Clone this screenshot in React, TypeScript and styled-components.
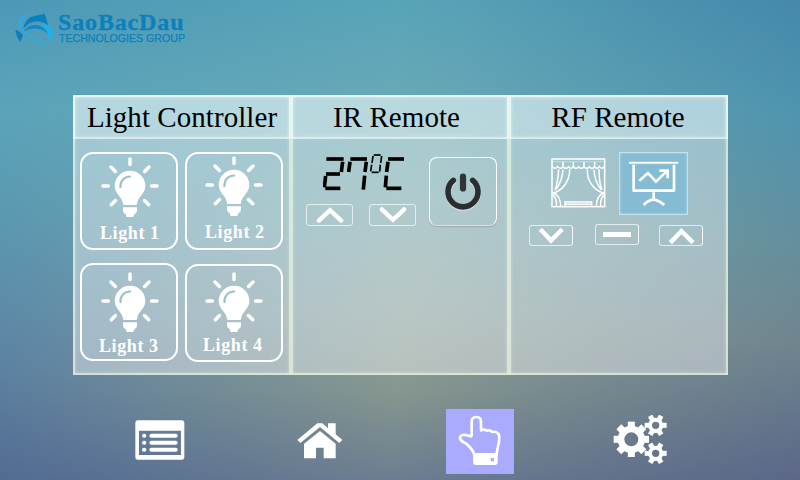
import React from "react";
import styled, { createGlobalStyle } from "styled-components";

const GlobalStyle = createGlobalStyle`
  * { box-sizing: border-box; }
  body { margin: 0; overflow: hidden; }
  button { padding: 0; background: none; border: 0; font: inherit; color: inherit; }
`;

const Screen = styled.div`
  position: relative;
  isolation: isolate;
  width: 800px;
  height: 480px;
  overflow: hidden;
  font-family: "Liberation Serif", "Times New Roman", serif;
  background: linear-gradient(#5aa6b9 0, #69aab7 90px, #7caaac 200px, #8ba39f 310px, #86978f 390px, #6c7d91 480px);

  &::before,
  &::after {
    content: "";
    position: absolute;
    inset: 0;
    z-index: -1;
  }
  &::before {
    background: linear-gradient(#4c98b6 0, #5aa3ba 110px, #5795b0 230px, #557da4 370px, #4b6794 480px);
    mask-image: linear-gradient(100deg, #000 0, rgba(0, 0, 0, 0.5) 25%, transparent 52%);
  }
  &::after {
    background: linear-gradient(#4588aa 0, #4f94af 110px, #648f9d 240px, #70858f 340px, #66788c 400px, #5b6788 480px);
    mask-image: linear-gradient(270deg, #000 0, rgba(0, 0, 0, 0.6) 22%, transparent 50%);
  }
`;

const Brand = styled.header`
  display: flex;
  height: 95px;
  padding: 12px 0 0 14px;
  color: #0b80bd;
`;

const BrandText = styled.div`
  margin-left: 4px;
`;

const BrandName = styled.div`
  height: 21px;
  font-size: 24px;
  line-height: 20px;
  font-weight: bold;
  letter-spacing: 0.85px;
  -webkit-text-stroke: 0.3px #0b80bd;
  white-space: nowrap;
`;

const BrandTag = styled.div`
  padding-left: 1px;
  font: 10.6px/11px "Liberation Sans", Arial, sans-serif;
  -webkit-text-stroke: 0.25px #0b80bd;
  white-space: nowrap;
`;

const Art = styled.svg<{ $w: number; $h: number }>`
  display: block;
  flex: none;
  width: ${(p) => p.$w}px;
  height: ${(p) => p.$h}px;
`;

const Panel = styled.main`
  display: grid;
  grid-template-columns: 218px 218px 219px;
  width: 655px;
  height: 280px;
  margin-left: 73px;
`;

const Column = styled.section`
  display: flex;
  flex-direction: column;
  background: rgba(255, 255, 255, 0.4);
  box-shadow: inset 0 0 0 2px rgba(243, 250, 228, 0.45), inset 0 0 4px 1px rgba(243, 250, 232, 0.6);
`;

const Title = styled.h2<{ $shift?: number }>`
  height: 44px;
  margin: 0;
  padding-right: ${(p) => p.$shift ?? 0}px;
  font-size: 29px;
  line-height: 45px;
  font-weight: normal;
  letter-spacing: 0.06px;
  text-align: center;
  white-space: nowrap;
  color: #000;
  background: rgba(228, 245, 250, 0.32);
  box-shadow: inset 0 0 0 2px rgba(245, 255, 250, 0.35), inset 0 0 5px 1px rgba(245, 255, 252, 0.5);
`;

const LightGrid = styled.div`
  display: grid;
  grid-template-columns: 98px 98px;
  column-gap: 7px;
  row-gap: 13px;
  padding: 13px 0 0 7px;
`;

const LightTile = styled.button<{ $drop: number }>`
  display: flex;
  flex-direction: column;
  align-items: flex-start;
  width: 98px;
  height: 98px;
  margin-top: ${(p) => p.$drop}px;
  border: 2px solid #fff;
  border-radius: 13px;
`;

const BulbSlot = styled.span<{ $top: number; $left: number }>`
  padding: ${(p) => p.$top}px 0 0 ${(p) => p.$left}px;
`;

const LightLabel = styled.span<{ $top: number; $left: number }>`
  margin: ${(p) => p.$top}px 0 0 ${(p) => p.$left}px;
  font-size: 18px;
  line-height: 20px;
  font-weight: bold;
  letter-spacing: 0.6px;
  white-space: nowrap;
  color: #fff;
`;

const IrBody = styled.div`
  display: flex;
  padding: 13px 0 0 15px;
`;

const Climate = styled.div`
  width: 123px;
`;

const Reading = styled.div`
  padding-left: 17px;
  height: 52px;
`;

const KeyRow = styled.div<{ $gap: number }>`
  display: flex;
  gap: ${(p) => p.$gap}px;
`;

const Key = styled.button<{ $w: number; $drop?: number }>`
  display: grid;
  place-items: center;
  width: ${(p) => p.$w}px;
  height: 22px;
  margin-top: ${(p) => p.$drop ?? 0}px;
  border: 1px solid rgba(255, 255, 255, 0.68);
  border-radius: 3px;
`;

const RfKey = styled(Key)`
  height: 21px;
  border-right-width: 1.5px;
  border-right-color: rgba(255, 255, 255, 0.9);
`;

const PowerKey = styled.button`
  display: grid;
  place-items: center;
  width: 68px;
  height: 69px;
  margin-top: 5px;
  border: 1.5px solid #fff;
  border-bottom-color: #e6dcdf;
  border-radius: 8px;
  box-shadow: 0 1px 1px rgba(150, 110, 120, 0.35);
`;

const RfDevices = styled.div`
  display: flex;
  padding: 13px 0 0 42px;
`;

const CurtainKey = styled.button`
  height: 50px;
  margin: 6px 13px 0 0;
`;

const ScreenKey = styled.button`
  display: grid;
  place-items: center;
  width: 69px;
  height: 63px;
  background: #86bbd4;
  box-shadow: inset 0 0 0 1px rgba(205, 235, 240, 0.7), inset 0 0 3px 1px rgba(190, 225, 235, 0.8);
`;

const RfKeys = styled.div`
  display: grid;
  grid-template-columns: 66px 64px 44px;
  padding: 9px 0 0 20px;
`;

const Nav = styled.nav`
  display: flex;
  align-items: flex-start;
  padding-top: 34px;
`;

const NavItem = styled.button<{ $left: number; $top: number }>`
  margin: ${(p) => p.$top}px 0 0 ${(p) => p.$left}px;
`;

const TouchItem = styled(NavItem)`
  width: 68px;
  height: 65px;
  background: #aaaaff;
`;

function Logo() {
  return (
    <Art $w={40} $h={36} viewBox="42 36 120 108">
      <path d="M92 51L134 41Q140 56 144 76Q118 56 90 69Q78 75 70 86Q74 62 92 51Z" fill="#087fbe" />
      <path d="M49 90Q62 95 69 106L61 126Q50 112 46 94Z" fill="#087fbe" />
      <path d="M70 96Q84 72 111 75Q135 80 146 104Q133 89 112 86Q88 84 70 96Z" fill="#1188c8" />
      <path d="M126 72Q154 72 164 100L146 125Q148 94 126 72Z" fill="#1fb0f0" />
      <path
        d="M82 47C54 46 54 76 76 99C94 117 120 120 133 135"
        fill="none"
        stroke="#20b2f0"
        strokeWidth="5"
        strokeLinecap="round"
      />
    </Art>
  );
}

function Bulb() {
  return (
    <Art $w={58} $h={61} viewBox="-29 -29 58 61">
      <path
        d="M0-27v5.4M-27 0h5.4M21.6 0h5.4M-19-19l4.4 4.4M19-19l-4.4 4.4M-14.5 14.5l-4.2 4.2M14.5 14.5l4.2 4.2"
        stroke="#fff"
        strokeWidth="3.5"
        strokeLinecap="round"
      />
      <path d="M0-15.3A15.2 15.2 0 0 1 15.3 0C15.3 8 7.8 10 6.7 19H-6.7C-7.8 10-15.3 8-15.3 0A15.2 15.2 0 0 1 0-15.3Z" fill="#fff" />
      <path d="M-7 21.3H7V25Q6.5 27.5 4.5 28L3.3 31H-3.3L-4.5 28Q-6.5 27.5-7 25Z" fill="#fff" />
      <path d="M-9.6 1.2C-9.6-5-6-9 .2-9.5" fill="none" stroke="#9fc2c9" strokeWidth="2.2" strokeLinecap="round" />
    </Art>
  );
}

type Segment = [number, number, number, number];

const temperature: { weight: number; segments: Segment[] }[] = [
  { weight: 11, segments: [[94, 57, 146, 57], [143, 65, 139, 96], [93, 102, 135, 102], [92, 108, 88, 142], [91, 145, 136, 145]] },
  { weight: 11, segments: [[166, 57, 216, 57], [165, 65, 161, 96], [214, 65, 210, 96], [209, 107, 205, 149]] },
  { weight: 5, segments: [[236, 45, 257, 45], [260, 48, 257, 69], [256, 74, 254, 95], [230, 97, 251, 97], [230, 74, 227, 94], [234, 48, 231, 69]] },
  { weight: 11, segments: [[279, 57, 327, 57], [279, 65, 275, 96], [274, 107, 271, 142], [274, 145, 319, 145]] },
];

function SegmentDisplay() {
  return (
    <Art $w={84} $h={40} viewBox="84 36 252 120" role="img" aria-label="27°C">
      {temperature.map((digit, i) => (
        <g key={i} stroke="#000" strokeWidth={digit.weight}>
          {digit.segments.map(([x1, y1, x2, y2], j) => (
            <line key={j} x1={x1} y1={y1} x2={x2} y2={y2} />
          ))}
        </g>
      ))}
    </Art>
  );
}

function Chevron({ up = false }: { up?: boolean }) {
  return (
    <Art $w={30} $h={18} viewBox="-15 -9 30 18">
      <path
        d={up ? "M-11.2 5.6L0-4.8L11.2 5.6" : "M-11.2-5.6L0 4.8L11.2-5.6"}
        fill="none"
        stroke="#fff"
        strokeWidth="4.4"
        strokeLinecap="round"
      />
    </Art>
  );
}

function SteepChevron({ up = false }: { up?: boolean }) {
  return (
    <Art $w={30} $h={18} viewBox="-15 -9 30 18">
      <path
        d={up ? "M-10.6 6.6L.4-4.8L12 6.6" : "M-10.6-6.8L0 4.6L11.2-6.8"}
        fill="none"
        stroke="#fff"
        strokeWidth="4.4"
      />
    </Art>
  );
}

function Minus() {
  return (
    <Art $w={30} $h={5} viewBox="0 0 30 5">
      <rect x="1" width="28" height="5" fill="#fff" />
    </Art>
  );
}

function Power() {
  return (
    <Art $w={40} $h={42} viewBox="-20 -21 40 42">
      <g fill="none" strokeLinecap="round">
        <path d="M-9.7-11.6A15 15 0 1 0 9.7-11.6" stroke="#dbe5e6" strokeWidth="5.6" transform="translate(0 1.4)" opacity=".7" />
        <path d="M-9.7-11.6A15 15 0 1 0 9.7-11.6" stroke="#2a2e31" strokeWidth="5.6" />
        <path d="M0-15.4V-3.6" stroke="#303437" strokeWidth="6.2" />
      </g>
    </Art>
  );
}

function Curtain() {
  return (
    <Art $w={55} $h={50} viewBox="107 53 165 150">
      <g fill="none" stroke="#fff" strokeWidth="4.5">
        <rect x="110" y="56" width="158" height="143" />
        <path d="M110 64H268" strokeWidth="2" opacity=".6" />
        <path d="M110 76Q118 91 127 78Q135 89 143 79Q152 89 160 79Q167 89 174 79Q182 89 190 79Q198 89 206 79Q214 89 222 79Q230 89 238 79Q246 89 252 78Q261 90 268 76" />
        <path d="M143 65V79M174 65V79M206 65V79M238 65V79" />
        <path d="M163 87C164 121 143 150 112 159M143 88C141 117 129 138 121 148M130 87C128 117 124 137 119 149M216 87C214 121 235 150 267 159M236 88C237 117 250 138 258 148M251 87C251 117 255 137 260 149" />
        <path d="M112 157Q136 164 136 199M113 163Q126 178 123 199M267 157Q243 164 243 199M266 163Q253 178 256 199" />
        <path d="M149 199V185H229V199M150 192H229" />
      </g>
    </Art>
  );
}

function Presentation() {
  return (
    <Art $w={52} $h={48} viewBox="337 61 156 144">
      <g fill="none" stroke="#fff" strokeWidth="8" strokeLinejoin="round">
        <path d="M340 69H488" strokeWidth="6" />
        <path d="M354 75V153H475V75" />
        <path d="M414 158V177M384 196Q397 182 414 179Q432 183 446 196" />
        <path d="M371 123L397 100L421 126L452 96M431 93H456V116" strokeLinejoin="miter" />
      </g>
    </Art>
  );
}

function ListIcon() {
  return (
    <Art $w={50} $h={40} viewBox="44 46 150 120">
      <path fillRule="evenodd" fill="#fff" d="M53 47H184Q192 47 192 56V157Q192 165 184 165H53Q45 165 45 157V56Q45 47 53 47ZM56 78V151H182V78Z" />
      <g stroke="#fff" strokeWidth="12" strokeLinecap="round">
        <path d="M93 93H166M93 114H166M93 135H166" />
        <path d="M71 93h1M71 114h1M71 135h1" />
      </g>
    </Art>
  );
}

function HomeIcon() {
  return (
    <Art $w={46} $h={37} viewBox="51 50 138 111">
      <path fill="#fff" d="M120 77L167 115V159H131V127H108V159H72V115Z" />
      <path fill="#fff" d="M52 104L112 54H127L144 69V54H167V87L187 104L178 113L120 65L61 113Z" />
    </Art>
  );
}

function TouchIcon() {
  return (
    <Art $w={68} $h={65} viewBox="30 27 204 195">
      <path
        d="M114 163C112 148 99 138 88 129C76 125 68 115 74 108C79 101 95 106 104 109C108 110 107 103 107 96V65Q107 51 121 51Q135 51 135 65V91Q144 86 152 92Q162 89 169 96Q181 93 188 103C195 117 184 137 182 163Z"
        fill="none"
        stroke="#fff"
        strokeWidth="8"
        strokeLinejoin="round"
      />
      <path fillRule="evenodd" fill="#fff" d="M111 161H185V186Q185 195 176 195H120Q111 195 111 186ZM164 174V184H174V174Z" />
    </Art>
  );
}

function Gear({ cx, cy, r, hole, teeth, tooth, reach }: { cx: number; cy: number; r: number; hole: number; teeth: number; tooth: number; reach: number }) {
  return (
    <g transform={`translate(${cx} ${cy})`} fill="#fff">
      <path fillRule="evenodd" d={`M${-r} 0a${r} ${r} 0 1 0 ${2 * r} 0a${r} ${r} 0 1 0 ${-2 * r} 0ZM${-hole} 0a${hole} ${hole} 0 1 0 ${2 * hole} 0a${hole} ${hole} 0 1 0 ${-2 * hole} 0Z`} />
      {Array.from({ length: teeth }, (_, i) => (
        <rect key={i} x={r - 5} y={-tooth / 2} width={reach - r + 5} height={tooth} transform={`rotate(${(i * 360) / teeth})`} />
      ))}
    </g>
  );
}

function GearsIcon() {
  return (
    <Art $w={55} $h={50} viewBox="40 30 165 150">
      <Gear cx={95} cy={103} r={41} hole={21} teeth={8} tooth={21} reach={53} />
      <Gear cx={168} cy={61} r={23} hole={11} teeth={6} tooth={15} reach={33} />
      <Gear cx={168} cy={145} r={23} hole={11} teeth={6} tooth={15} reach={33} />
    </Art>
  );
}

const lights = [
  { name: "Light 1", drop: 0, bulbTop: 3, bulbLeft: 19, labelTop: 5, labelLeft: 18 },
  { name: "Light 2", drop: 0, bulbTop: 2, bulbLeft: 18, labelTop: 5, labelLeft: 18 },
  { name: "Light 3", drop: 0, bulbTop: 7, bulbLeft: 19, labelTop: 3, labelLeft: 17 },
  { name: "Light 4", drop: 1, bulbTop: 6, bulbLeft: 18, labelTop: 2, labelLeft: 16 },
];

export default function App() {
  return (
    <>
      <GlobalStyle />
      <Screen>
        <Brand>
          <Logo />
          <BrandText>
            <BrandName>SaoBacDau</BrandName>
            <BrandTag>TECHNOLOGIES GROUP</BrandTag>
          </BrandText>
        </Brand>
        <Panel>
          <Column>
            <Title>Light Controller</Title>
            <LightGrid>
              {lights.map((l) => (
                <LightTile key={l.name} $drop={l.drop}>
                  <BulbSlot $top={l.bulbTop} $left={l.bulbLeft}>
                    <Bulb />
                  </BulbSlot>
                  <LightLabel $top={l.labelTop} $left={l.labelLeft}>{l.name}</LightLabel>
                </LightTile>
              ))}
            </LightGrid>
          </Column>
          <Column>
            <Title $shift={7}>IR Remote</Title>
            <IrBody>
              <Climate>
                <Reading>
                  <SegmentDisplay />
                </Reading>
                <KeyRow $gap={16}>
                  <Key $w={47}><Chevron up /></Key>
                  <Key $w={47}><Chevron /></Key>
                </KeyRow>
              </Climate>
              <PowerKey aria-label="Power"><Power /></PowerKey>
            </IrBody>
          </Column>
          <Column>
            <Title $shift={1}>RF Remote</Title>
            <RfDevices>
              <CurtainKey aria-label="Curtain"><Curtain /></CurtainKey>
              <ScreenKey aria-label="Projection screen"><Presentation /></ScreenKey>
            </RfDevices>
            <RfKeys>
              <RfKey $w={44} $drop={1}><SteepChevron /></RfKey>
              <RfKey $w={44}><Minus /></RfKey>
              <RfKey $w={44} $drop={1}><SteepChevron up /></RfKey>
            </RfKeys>
          </Column>
        </Panel>
        <Nav>
          <NavItem $left={135} $top={11} aria-label="List"><ListIcon /></NavItem>
          <NavItem $left={112} $top={13} aria-label="Home"><HomeIcon /></NavItem>
          <TouchItem $left={103} $top={0} aria-label="Control"><TouchIcon /></TouchItem>
          <NavItem $left={99} $top={6} aria-label="Settings"><GearsIcon /></NavItem>
        </Nav>
      </Screen>
    </>
  );
}
